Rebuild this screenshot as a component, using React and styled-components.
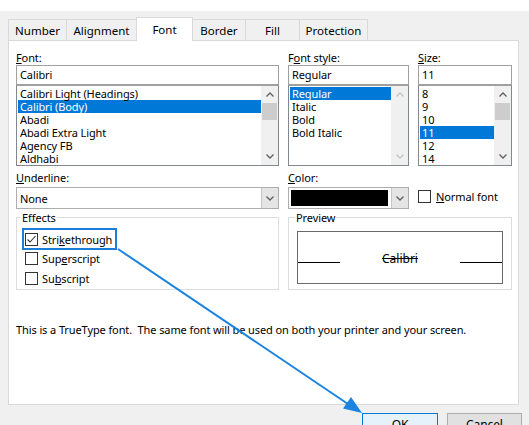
import styled, { createGlobalStyle } from 'styled-components'

const GlobalStyle = createGlobalStyle`
  html, body { margin: 0; padding: 0; }
  body { font-family: "Noto Sans", "Open Sans", sans-serif; }
  * { box-sizing: border-box; }
`

const Window = styled.div`
  position: relative;
  width: 529px;
  height: 425px;
  overflow: hidden;
  background: #f0f0f0;
  font-size: 11px;
  letter-spacing: -0.1px;
  color: #000;
`

const TitleStrip = styled.div`
  height: 11px;
  background: #fff;
`

const TabBar = styled.div`
  position: relative;
  z-index: 1;
  display: flex;
  align-items: flex-end;
  height: 24px;
  margin: 6px 0 -1px 8px;
`

const Tab = styled.div`
  position: relative;
  z-index: ${(p) => (p.$active ? 1 : 0)};
  display: flex;
  align-items: center;
  justify-content: center;
  width: ${(p) => p.$w}px;
  height: ${(p) => (p.$active ? 24 : 22)}px;
  margin-left: -1px;
  padding-bottom: ${(p) => (p.$active ? 1 : 0)}px;
  border: 1px solid #d9d9d9;
  border-bottom: ${(p) => (p.$active ? 'none' : '1px solid #d9d9d9')};
  background: ${(p) => (p.$active ? '#fff' : '#f0f0f0')};
  font-size: 11.5px;
  letter-spacing: 0;
  &:first-child {
    margin-left: 0;
  }
`

const Panel = styled.div`
  height: 365px;
  margin: 0 10px 0 8px;
  padding: 9px 5px 0 7px;
  background: #fff;
  border: 1px solid #d9d9d9;
`

const FieldGrid = styled.div`
  display: grid;
  grid-template-columns: 263px 121px 94px;
  column-gap: 9px;
`

const Field = styled.div`
  display: flex;
  flex-direction: column;
  margin-top: ${(p) => p.$top || 0}px;
`

const Label = styled.div`
  height: 15px;
  line-height: 15px;
  margin-bottom: ${(p) => p.$gap || 0}px;
  white-space: nowrap;
`

const TextBox = styled.div`
  height: 20px;
  padding-left: 3px;
  line-height: 18px;
  border: 1px solid #a0a0a0;
`

const ListBox = styled.div`
  display: flex;
  height: 81px;
  border: 1px solid #828790;
  border-top-color: #a0a0a0;
`

const Items = styled.div`
  flex: 1;
  padding: 1px 0 0 1px;
  overflow: hidden;
`

const Item = styled.div`
  height: 13px;
  padding-left: 2px;
  line-height: 13px;
  white-space: nowrap;
  background: ${(p) => (p.$selected ? '#0078d7' : 'transparent')};
  color: ${(p) => (p.$selected ? '#fff' : '#000')};
`

const ScrollBar = styled.div`
  display: flex;
  flex-direction: column;
  width: 17px;
  background: #f0f0f0;
`

const ScrollArrow = styled.div`
  display: flex;
  align-items: center;
  justify-content: center;
  height: 17px;
  color: ${(p) => (p.$disabled ? '#c3c3c3' : '#606060')};
`

const Thumb = styled.div`
  height: 17px;
  margin: 0 1px;
  background: #cdcdcd;
`

const Track = styled.div`
  flex: 1;
`

const Select = styled.div`
  display: flex;
  align-items: center;
  height: 22px;
  border: 1px solid #adadad;
`

const SelectText = styled.div`
  flex: 1;
  padding-left: 3px;
`

const Swatch = styled.div`
  flex: 1;
  align-self: stretch;
  margin: 2px 3px 2px 2px;
  background: #000;
`

const DropButton = styled.div`
  display: flex;
  align-items: center;
  justify-content: center;
  width: 17px;
  align-self: stretch;
  background: #e5e5e5;
  border-left: 1px solid #c6c6c6;
  color: #606060;
`

const CheckRow = styled.label`
  display: flex;
  align-items: center;
  gap: 4px;
  width: fit-content;
  height: ${(p) => (p.$highlight ? 20 : 19.5)}px;
  padding: 0 ${(p) => (p.$highlight ? 4 : 2)}px 0 2px;
  outline: ${(p) => (p.$highlight ? '2px solid #1a7fd9' : 'none')};
  outline-offset: -1px;
  white-space: nowrap;
`

const Box = styled.span`
  display: flex;
  align-items: center;
  justify-content: center;
  width: 13px;
  height: 13px;
  border: 1px solid #333;
  background: #fff;
`

const NormalFont = styled(CheckRow)`
  align-self: end;
  height: 15px;
  margin-bottom: 5px;
  padding: 0;
  gap: 5px;
`

const Group = styled.fieldset`
  grid-column: ${(p) => p.$span || 'auto'};
  height: 80px;
  min-width: 0;
  margin: 1px 0 0;
  padding: ${(p) => p.$pad};
  border: 1px solid #dcdcdc;
`

const Legend = styled.legend`
  height: 15px;
  margin-left: -2px;
  padding: 0 1px;
  line-height: 15px;
`

const PreviewBox = styled.div`
  display: grid;
  grid-template-columns: 42px 1fr 42px;
  align-items: end;
  height: 53px;
  padding-bottom: 20px;
  border: 1px solid #6a6a6a;
`

const BaseLine = styled.div`
  height: 1px;
  background: #000;
`

const SampleText = styled.div`
  margin-bottom: -3px;
  line-height: 15px;
  text-align: center;
  text-decoration: line-through;
  font-size: 12px;
  letter-spacing: 0;
`

const Info = styled.div`
  margin-top: 32px;
  line-height: 15px;
  white-space: pre;
`

const Footer = styled.div`
  display: flex;
  justify-content: flex-end;
  gap: 9px;
  margin-top: 8px;
  padding-right: 7px;
`

const Button = styled.div`
  display: flex;
  align-items: center;
  justify-content: center;
  width: ${(p) => p.$w}px;
  height: 23px;
  background: ${(p) => (p.$primary ? '#e5f1fb' : '#e1e1e1')};
  border: 1px solid ${(p) => (p.$primary ? '#0078d7' : '#adadad')};
  font-size: 12px;
`

const Overlay = styled.svg`
  position: absolute;
  left: 0;
  top: 0;
  pointer-events: none;
`

function Chevron({ up }) {
  return (
    <svg width="8" height="5" viewBox="0 0 8 5">
      <polyline
        points={up ? '0.5,4.5 4,1 7.5,4.5' : '0.5,0.5 4,4 7.5,0.5'}
        fill="none"
        stroke="currentColor"
        strokeWidth="1.3"
      />
    </svg>
  )
}

function Check({ checked }) {
  return (
    <Box>
      {checked && (
        <svg width="11" height="11" viewBox="0 0 11 11">
          <polyline points="1.5,5.5 4,8 9.5,2" fill="none" stroke="#333" strokeWidth="1.1" />
        </svg>
      )}
    </Box>
  )
}

function List({ items, selected, disabled }) {
  return (
    <ListBox>
      <Items>
        {items.map((it) => (
          <Item key={it} $selected={it === selected}>
            {it}
          </Item>
        ))}
      </Items>
      <ScrollBar>
        <ScrollArrow $disabled={disabled}>
          <Chevron up />
        </ScrollArrow>
        {!disabled && <Thumb />}
        <Track />
        <ScrollArrow $disabled={disabled}>
          <Chevron />
        </ScrollArrow>
      </ScrollBar>
    </ListBox>
  )
}

const tabs = [
  ['Number', 59],
  ['Alignment', 71],
  ['Font', 57],
  ['Border', 54],
  ['Fill', 55],
  ['Protection', 69],
]

const fonts = ['Calibri Light (Headings)', 'Calibri (Body)', 'Abadi', 'Abadi Extra Light', 'Agency FB', 'Aldhabi']
const styles = ['Regular', 'Italic', 'Bold', 'Bold Italic']
const sizes = ['8', '9', '10', '11', '12', '14']

export default function App() {
  return (
    <Window>
      <GlobalStyle />
      <TitleStrip />
      <TabBar>
        {tabs.map(([name, w]) => (
          <Tab key={name} $w={w} $active={name === 'Font'}>
            {name}
          </Tab>
        ))}
      </TabBar>
      <Panel>
        <FieldGrid>
          <Field>
            <Label><u>F</u>ont:</Label>
            <TextBox>Calibri</TextBox>
            <List items={fonts} selected="Calibri (Body)" />
          </Field>
          <Field>
            <Label>F<u>o</u>nt style:</Label>
            <TextBox>Regular</TextBox>
            <List items={styles} selected="Regular" disabled />
          </Field>
          <Field>
            <Label><u>S</u>ize:</Label>
            <TextBox>11</TextBox>
            <List items={sizes} selected="11" />
          </Field>

          <Field $top={4}>
            <Label $gap={2}><u>U</u>nderline:</Label>
            <Select>
              <SelectText>None</SelectText>
              <DropButton><Chevron /></DropButton>
            </Select>
          </Field>
          <Field $top={4}>
            <Label $gap={2}><u>C</u>olor:</Label>
            <Select>
              <Swatch />
              <DropButton><Chevron /></DropButton>
            </Select>
          </Field>
          <NormalFont>
            <Check />
            <span><u>N</u>ormal font</span>
          </NormalFont>

          <Group $pad="4px 6px 0">
            <Legend>Effects</Legend>
            <CheckRow $highlight>
              <Check checked />
              <span>Stri<u>k</u>ethrough</span>
            </CheckRow>
            <CheckRow>
              <Check />
              <span>Sup<u>e</u>rscript</span>
            </CheckRow>
            <CheckRow>
              <Check />
              <span>Su<u>b</u>script</span>
            </CheckRow>
          </Group>
          <Group $span="2 / 4" $pad="6px 8px 0">
            <Legend>Preview</Legend>
            <PreviewBox>
              <BaseLine />
              <SampleText>Calibri</SampleText>
              <BaseLine />
            </PreviewBox>
          </Group>
        </FieldGrid>
        <Info>This is a TrueType font.  The same font will be used on both your printer and your screen.</Info>
      </Panel>
      <Footer>
        <Button $w={76} $primary>OK</Button>
        <Button $w={75}>Cancel</Button>
      </Footer>
      <Overlay width="529" height="425" viewBox="0 0 529 425">
        <line x1="118" y1="249" x2="348" y2="404" stroke="#1b84e0" strokeWidth="2" />
        <polygon points="362,413 343,408.5 351,397" fill="#1b84e0" />
      </Overlay>
    </Window>
  )
}
